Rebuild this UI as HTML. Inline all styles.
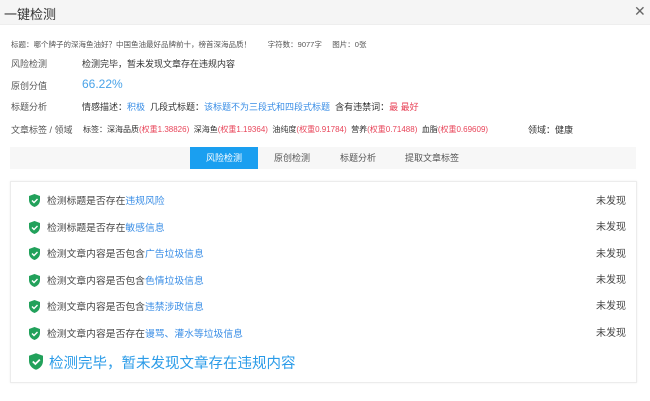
<!DOCTYPE html>
<html><head><meta charset="utf-8"><style>
*{margin:0;padding:0;box-sizing:border-box}
body{width:650px;height:401px;background:#fff;font-family:"Liberation Sans","Noto Sans CJK SC",sans-serif;color:#333;position:relative;overflow:hidden;font-size:9px}
.hd{position:absolute;left:0;top:0;width:650px;height:25px;background:#f5f5f5;border-bottom:1px solid #eee}
.hd .t{position:absolute;left:4px;top:4px;font-size:13px;color:#333}
.hd .x{position:absolute;left:634px;top:3px;font-size:14px;color:#666}
.a{position:absolute;white-space:nowrap}
.lb{left:11px;color:#555}
.blue{color:#3a8ee6}.red{color:#e8455a}
.tabs{position:absolute;left:10px;top:147px;width:626px;height:22px;background:#f7f7f7}
.tab{position:absolute;top:0;height:22px;line-height:22px;font-size:9px;color:#555;text-align:center}
.tab.on{background:#1a9ff0;color:#fff}
.box{position:absolute;left:10px;top:181px;width:627px;height:202px;border:1px solid #ececec;box-shadow:0 0 2px #eee}
.it{position:absolute;left:18px;font-size:9.8px;color:#444;white-space:nowrap}
.it svg{position:absolute;left:0;top:1px}
.it span.tx{position:absolute;left:18px;top:0}
.nf{position:absolute;left:585px;font-size:10px;color:#444}
</style></head><body>
<div class="hd"><div class="t">一键检测</div><div class="x">✕</div></div>
<div class="a lb" style="top:39px;font-size:7.5px">标题：哪个牌子的深海鱼油好？中国鱼油最好品牌前十，榜首深海品质！&nbsp;&nbsp;&nbsp;&nbsp;&nbsp;&nbsp;&nbsp;&nbsp;字符数：9077字&nbsp;&nbsp;&nbsp;&nbsp;&nbsp;图片：0张</div>
<div class="a lb" style="top:57px">风险检测</div>
<div class="a" style="left:82px;top:57px">检测完毕，暂未发现文章存在违规内容</div>
<div class="a lb" style="top:79px">原创分值</div>
<div class="a blue" style="left:82px;top:77px;font-size:12px;color:#4aa3e8">66.22%</div>
<div class="a lb" style="top:100px">标题分析</div>
<div class="a" style="left:82px;top:100px">情感描述：<span class="blue">积极</span>&nbsp;&nbsp;几段式标题：<span class="blue">该标题不为三段式和四段式标题</span>&nbsp;&nbsp;含有违禁词：<span class="red">最 最好</span></div>
<div class="a lb" style="top:123px">文章标签 / 领域</div>
<div class="a" style="left:83px;top:124px;font-size:8px">标签：深海品质<span class="red">(权重1.38826)</span>&nbsp;&nbsp;深海鱼<span class="red">(权重1.19364)</span>&nbsp;&nbsp;油纯度<span class="red">(权重0.91784)</span>&nbsp;&nbsp;营养<span class="red">(权重0.71488)</span>&nbsp;&nbsp;血脂<span class="red">(权重0.69609)</span></div>
<div class="a" style="left:528px;top:123px">领域：健康</div>
<div class="tabs">
<div class="tab on" style="left:180px;width:68px">风险检测</div>
<div class="tab" style="left:252px;width:60px">原创检测</div>
<div class="tab" style="left:318px;width:60px">标题分析</div>
<div class="tab" style="left:382px;width:80px">提取文章标签</div>
</div>
<div class="box">
<div class="it" style="top:11px"><svg width="11" height="13" viewBox="0 0 11 13"><path d="M5.5 0L11 2v4c0 3.5-2.5 6-5.5 7C2.5 12 0 9.5 0 6V2z" fill="#22a15b"/><path d="M3 6.5l2 2 3.5-3.5" stroke="#fff" stroke-width="1.4" fill="none"/></svg><span class="tx">检测标题是否存在<span class="blue">违规风险</span></span></div>
<div class="nf" style="top:10px">未发现</div>
<div class="it" style="top:38px"><svg width="11" height="13" viewBox="0 0 11 13"><path d="M5.5 0L11 2v4c0 3.5-2.5 6-5.5 7C2.5 12 0 9.5 0 6V2z" fill="#22a15b"/><path d="M3 6.5l2 2 3.5-3.5" stroke="#fff" stroke-width="1.4" fill="none"/></svg><span class="tx">检测标题是否存在<span class="blue">敏感信息</span></span></div>
<div class="nf" style="top:36px">未发现</div>
<div class="it" style="top:64px"><svg width="11" height="13" viewBox="0 0 11 13"><path d="M5.5 0L11 2v4c0 3.5-2.5 6-5.5 7C2.5 12 0 9.5 0 6V2z" fill="#22a15b"/><path d="M3 6.5l2 2 3.5-3.5" stroke="#fff" stroke-width="1.4" fill="none"/></svg><span class="tx">检测文章内容是否包含<span class="blue">广告垃圾信息</span></span></div>
<div class="nf" style="top:63px">未发现</div>
<div class="it" style="top:91px"><svg width="11" height="13" viewBox="0 0 11 13"><path d="M5.5 0L11 2v4c0 3.5-2.5 6-5.5 7C2.5 12 0 9.5 0 6V2z" fill="#22a15b"/><path d="M3 6.5l2 2 3.5-3.5" stroke="#fff" stroke-width="1.4" fill="none"/></svg><span class="tx">检测文章内容是否包含<span class="blue">色情垃圾信息</span></span></div>
<div class="nf" style="top:89px">未发现</div>
<div class="it" style="top:117px"><svg width="11" height="13" viewBox="0 0 11 13"><path d="M5.5 0L11 2v4c0 3.5-2.5 6-5.5 7C2.5 12 0 9.5 0 6V2z" fill="#22a15b"/><path d="M3 6.5l2 2 3.5-3.5" stroke="#fff" stroke-width="1.4" fill="none"/></svg><span class="tx">检测文章内容是否包含<span class="blue">违禁涉政信息</span></span></div>
<div class="nf" style="top:115px">未发现</div>
<div class="it" style="top:144px"><svg width="11" height="13" viewBox="0 0 11 13"><path d="M5.5 0L11 2v4c0 3.5-2.5 6-5.5 7C2.5 12 0 9.5 0 6V2z" fill="#22a15b"/><path d="M3 6.5l2 2 3.5-3.5" stroke="#fff" stroke-width="1.4" fill="none"/></svg><span class="tx">检测文章内容是否存在<span class="blue">谩骂、灌水等垃圾信息</span></span></div>
<div class="nf" style="top:142px">未发现</div>
<div class="it" style="top:170px;font-size:14.5px;color:#2a9be8"><svg width="14" height="17" viewBox="0 0 11 13" style="top:1px"><path d="M5.5 0L11 2v4c0 3.5-2.5 6-5.5 7C2.5 12 0 9.5 0 6V2z" fill="#22a15b"/><path d="M3 6.5l2 2 3.5-3.5" stroke="#fff" stroke-width="1.4" fill="none"/></svg><span class="tx" style="left:20px">检测完毕，暂未发现文章存在违规内容</span></div>
</div>
</body></html>
